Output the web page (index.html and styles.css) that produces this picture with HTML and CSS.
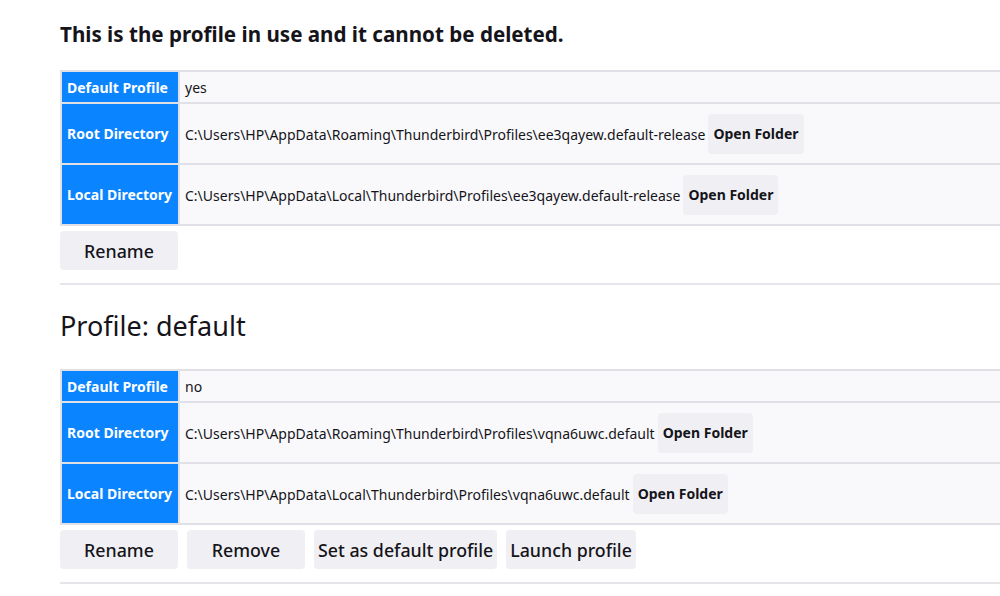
FILE: index.html
```html
<!DOCTYPE html>
<html>
<head>
<meta charset="utf-8">
<link rel="stylesheet" href="styles.css">
</head>
<body>
<div class="page">
  <section class="profile">
    <h2 class="inuse">This is the profile in use and it cannot be deleted.</h2>
    <table class="info">
      <tr class="short"><th>Default Profile</th><td>yes</td></tr>
      <tr><th>Root Directory</th><td><span class="path">C:\Users\HP\AppData\Roaming\Thunderbird\Profiles\ee3qayew.default-release</span><button class="open">Open Folder</button></td></tr>
      <tr><th>Local Directory</th><td><span class="path">C:\Users\HP\AppData\Local\Thunderbird\Profiles\ee3qayew.default-release</span><button class="open">Open Folder</button></td></tr>
    </table>
    <div class="actions"><button class="btn">Rename</button></div>
  </section>
  <section class="profile">
    <h2 class="title">Profile: default</h2>
    <table class="info">
      <tr class="short"><th>Default Profile</th><td>no</td></tr>
      <tr><th>Root Directory</th><td><span class="path">C:\Users\HP\AppData\Roaming\Thunderbird\Profiles\vqna6uwc.default</span><button class="open">Open Folder</button></td></tr>
      <tr><th>Local Directory</th><td><span class="path">C:\Users\HP\AppData\Local\Thunderbird\Profiles\vqna6uwc.default</span><button class="open">Open Folder</button></td></tr>
    </table>
    <div class="actions">
      <button class="btn">Rename</button>
      <button class="btn">Remove</button>
      <button class="btn">Set as default profile</button>
      <button class="btn">Launch profile</button>
    </div>
  </section>
</div>
</body>
</html>
```
FILE: styles.css
```css
html, body {
  margin: 0;
  padding: 0;
  overflow: hidden;
  background: #ffffff;
}
body {
  font-family: "Noto Sans", "Open Sans", sans-serif;
  color: #15141a;
  font-size: 14px;
}
.page {
  width: 1040px;
  padding-left: 60px;
}
.profile {
  border-bottom: 2px solid #e6e6ea;
  padding-bottom: 13px;
}
.inuse {
  margin: 0;
  padding-top: 21px;
  font-size: 20.6px;
  line-height: 27px;
  font-weight: 700;
  margin-bottom: 22px;
}
.title {
  margin: 0;
  padding-top: 24px;
  font-size: 27px;
  line-height: 34px;
  font-weight: 400;
  margin-bottom: 26px;
}
.info {
  width: 100%;
  border-collapse: collapse;
  border: 2px solid #e0e0e6;
}
.info th, .info td {
  border: 2px solid #e0e0e6;
  height: 59px;
  padding: 0 5px;
}
.info tr.short th, .info tr.short td {
  height: 30px;
}
.info th {
  background: #0a84ff;
  color: #ffffff;
  font-weight: 700;
  text-align: left;
  width: 106px;
  white-space: nowrap;
  font-size: 14px;
}
.info td {
  background: #f9f9fb;
  white-space: nowrap;
}
.path {
  vertical-align: middle;
}
.open {
  font-family: inherit;
  font-size: 14px;
  font-weight: 700;
  color: #15141a;
  background: #f0f0f4;
  border: 0;
  border-radius: 4px;
  height: 40px;
  padding: 0 5px;
  margin-left: 3px;
  vertical-align: middle;
}
.actions {
  display: flex;
  gap: 9px;
  margin-top: 5px;
}
.btn {
  font-family: inherit;
  font-size: 17.8px;
  font-weight: 500;
  color: #15141a;
  background: #f0f0f4;
  border: 0;
  border-radius: 4px;
  height: 39px;
  min-width: 118px;
  padding: 0 4px;
}
```
